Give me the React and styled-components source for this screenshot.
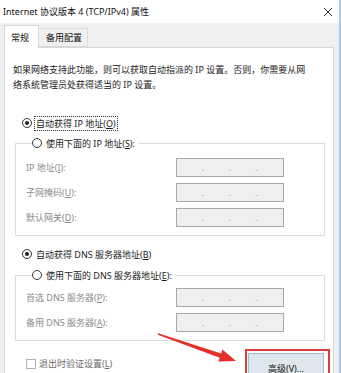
import React from "react";
import styled, { createGlobalStyle } from "styled-components";

const GlobalStyle = createGlobalStyle`
  html, body {
    margin: 0;
    padding: 0;
    background: #fff;
  }
  body {
    font-family: "Noto Sans", "Noto Sans CJK SC", sans-serif;
    font-size: 9px;
    color: #1a1a1a;
  }
`;

// 대화상자 전체 틀
const Window = styled.div`
  position: relative;
  width: 341px;
  height: 373px;
  box-sizing: border-box;
  display: flex;
  flex-direction: column;
  overflow: hidden;
  background: #fff;
  border-right: 2px solid #a9cbe9;
`;

const TitleBar = styled.div`
  flex-shrink: 0;
  height: 23px;
  display: flex;
  align-items: center;
  padding: 0 6px 0 3px;
  background: #fff;
`;

const Title = styled.div`
  flex: 1;
  color: #111;
`;

const Body = styled.div`
  flex: 1;
  min-height: 0;
  display: flex;
  flex-direction: column;
  background: #f0f0f0;
  padding: 2px 5px 0 4px;
`;

const TabStrip = styled.div`
  flex-shrink: 0;
  display: flex;
  align-items: flex-end;
  height: 22px;
  position: relative;
  z-index: 1;
`;

const Tab = styled.div`
  box-sizing: border-box;
  height: ${(p) => (p.active ? "23px" : "19px")};
  margin-bottom: ${(p) => (p.active ? "-1px" : "0")};
  padding: ${(p) => (p.active ? "0 9px 0 6px" : "0 5px 0 7px")};
  display: flex;
  align-items: center;
  background: ${(p) => (p.active ? "#fff" : "#f0f0f0")};
  border: 1px solid #d9d9d9;
  border-bottom: ${(p) => (p.active ? "none" : "1px solid #d9d9d9")};
  border-left: ${(p) => (p.active ? "1px solid #d9d9d9" : "none")};
  color: #111;
`;

const Panel = styled.div`
  flex: 1;
  min-height: 0;
  overflow: hidden;
  background: #fff;
  border: 1px solid #d9d9d9;
  border-bottom: none;
  display: flex;
  flex-direction: column;
  padding: 14px 0 0 0;
`;

const Intro = styled.p`
  flex-shrink: 0;
  margin: 0 0 0 8px;
  line-height: 15px;
  color: #222;
`;

const RadioRow = styled.label`
  flex-shrink: 0;
  display: flex;
  align-items: center;
  height: 16px;
  margin: ${(p) => p.$margin || "0"};
  padding-left: 17px;
  color: #1a1a1a;
`;

const RadioDot = styled.span`
  box-sizing: border-box;
  width: 10px;
  height: 10px;
  border-radius: 50%;
  border: 1px solid #333;
  margin-right: 3px;
  display: flex;
  align-items: center;
  justify-content: center;
  background: #fff;

  &::after {
    content: "";
    width: 4px;
    height: 4px;
    border-radius: 50%;
    background: ${(p) => (p.checked ? "#222" : "transparent")};
  }
`;

const Caption = styled.span`
  padding: 0 1px;
  line-height: 13px;
  outline: ${(p) => (p.focused ? "1px dotted #333" : "none")};
`;

const Group = styled.fieldset`
  flex-shrink: 0;
  margin: ${(p) => p.$margin || "0"} 8px 0 10px;
  padding: ${(p) => p.$top}px 0 8px 10px;
  border: 1px solid #dcdcdc;
  min-width: 0;

  legend {
    margin-left: 6px;
    padding: 0 3px 0 0;
  }

  legend ${RadioRow} {
    padding-left: 0;
  }
`;

const Fields = styled.div`
  display: grid;
  grid-template-columns: 150px 108px;
  row-gap: 6px;
  align-items: center;
`;

const FieldLabel = styled.span`
  color: #8c8c8c;
`;

const AddressBox = styled.div`
  box-sizing: border-box;
  height: 19px;
  background: #efefef;
  border: 1px solid #a8a8a8;
  display: flex;
  justify-content: space-evenly;
  align-items: center;
  color: #9a9a9a;
  font-size: 9px;
`;

const Footer = styled.div`
  flex-shrink: 0;
  display: flex;
  align-items: flex-start;
  justify-content: space-between;
  margin: 8px 3px 0 21px;
`;

const CheckRow = styled.label`
  display: flex;
  align-items: center;
  color: #6a6a6a;
  margin-top: 8px;
`;

const CheckBox = styled.span`
  box-sizing: border-box;
  width: 10px;
  height: 10px;
  border: 1px solid #b3b3b3;
  margin-right: 3px;
  background: #fff;
`;

// 강조 표시(빨간 테두리)
const Highlight = styled.div`
  border: 2px solid #d9403a;
  padding: 2px 4px 0 1px;
`;

const Button = styled.button`
  box-sizing: border-box;
  width: 76px;
  height: 30px;
  font: inherit;
  color: #111;
  background: #dfe7ee;
  border: 1px solid #9dbdd8;
  padding: 0;
`;

const Overlay = styled.svg`
  position: absolute;
  left: 0;
  top: 0;
  pointer-events: none;
`;

const ipFields = [
  ["IP 地址(", "I", "):"],
  ["子网掩码(", "U", "):"],
  ["默认网关(", "D", "):"],
];

const dnsFields = [
  ["首选 DNS 服务器(", "P", "):"],
  ["备用 DNS 服务器(", "A", "):"],
];

const Address = () => (
  <AddressBox>
    <span>.</span>
    <span>.</span>
    <span>.</span>
  </AddressBox>
);

const FieldList = ({ items }) => (
  <Fields>
    {items.map(([pre, key, post]) => (
      <React.Fragment key={key}>
        <FieldLabel>
          {pre}
          <u>{key}</u>
          {post}
        </FieldLabel>
        <Address />
      </React.Fragment>
    ))}
  </Fields>
);

const Radio = ({ checked, focused, children, margin }) => (
  <RadioRow $margin={margin}>
    <RadioDot checked={checked} />
    <Caption focused={focused}>{children}</Caption>
  </RadioRow>
);

const App = () => (
  <Window>
    <GlobalStyle />
    <TitleBar>
      <Title>Internet 协议版本 4 (TCP/IPv4) 属性</Title>
      <svg width="10" height="10" viewBox="0 0 10 10">
        <path d="M1 1 L9 9 M9 1 L1 9" stroke="#333" strokeWidth="1" />
      </svg>
    </TitleBar>
    <Body>
      <TabStrip>
        <Tab active>常规</Tab>
        <Tab>备用配置</Tab>
      </TabStrip>
      <Panel>
        <Intro>
          如果网络支持此功能，则可以获取自动指派的 IP 设置。否则，你需要从网
          <br />
          络系统管理员处获得适当的 IP 设置。
        </Intro>

        <Radio checked focused margin="23px 0 0 0">
          自动获得 IP 地址(<u>O</u>)
        </Radio>
        <Group $margin="4px" $top={7}>
          <legend>
            <Radio>
              使用下面的 IP 地址(<u>S</u>):
            </Radio>
          </legend>
          <FieldList items={ipFields} />
        </Group>

        <Radio checked margin="10px 0 0 0">
          自动获得 DNS 服务器地址(<u>B</u>)
        </Radio>
        <Group $margin="5px" $top={5}>
          <legend>
            <Radio>
              使用下面的 DNS 服务器地址(<u>E</u>):
            </Radio>
          </legend>
          <FieldList items={dnsFields} />
        </Group>

        <Footer>
          <CheckRow>
            <CheckBox />
            退出时验证设置(<u>L</u>)
          </CheckRow>
          <Highlight>
            <Button>
              高级(<u>V</u>)...
            </Button>
          </Highlight>
        </Footer>
      </Panel>
    </Body>

    <Overlay width="341" height="373" viewBox="0 0 341 373">
      <polygon
        points="158.2,333.2 221.1,353.5 222.4,349.6 236,361 218.2,361.6 219.7,357.7 157.8,334.8"
        fill="#e5302a"
      />
    </Overlay>
  </Window>
);

export default App;
